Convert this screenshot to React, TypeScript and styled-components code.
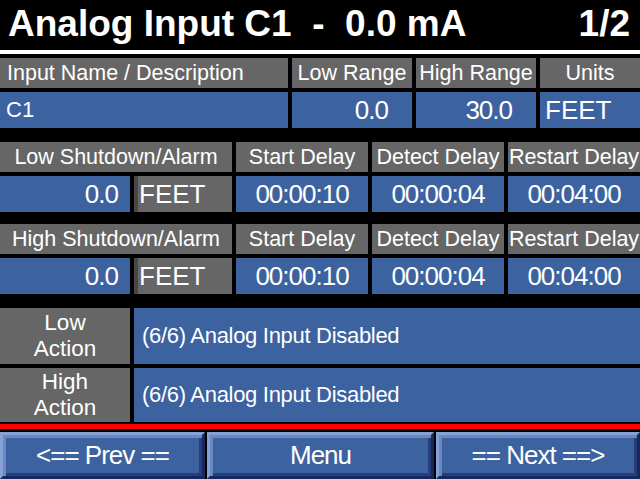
import React from "react";
import styled, { createGlobalStyle, css } from "styled-components";

const GlobalStyle = createGlobalStyle`
  html, body { margin: 0; padding: 0; background: #000; }
  body { font-family: "Liberation Sans", Arial, sans-serif; }
`;

const GRAY = "#666666";
const BLUE = "#3d62a0";

const Screen = styled.div`
  width: 640px;
  height: 479px;
  background: #000;
  display: flex;
  flex-direction: column;
  overflow: hidden;
  color: #fff;
`;

const TitleBar = styled.div`
  height: 50px;
  display: flex;
  align-items: center;
  justify-content: space-between;
  padding: 0 10px 3px 8px;
  box-sizing: border-box;
  font-weight: bold;
  font-size: 37px;
  white-space: pre;
`;

const Divider = styled.div`
  height: 4px;
  background: #fff;
  margin-bottom: 4px;
`;

const Grid = styled.div<{ $cols: string; $rows: string; $top?: number }>`
  display: grid;
  grid-template-columns: ${(p) => p.$cols};
  grid-template-rows: ${(p) => p.$rows};
  gap: 4px;
  margin-top: ${(p) => p.$top ?? 0}px;
`;

type CellProps = {
  $tone: "gray" | "blue";
  $align?: "left" | "center" | "right";
  $size?: number;
  $pad?: string;
  $span?: number;
  $tight?: boolean;
  $edge?: boolean;
};

const Cell = styled.div<CellProps>`
  background: ${(p) => (p.$tone === "gray" ? GRAY : BLUE)};
  display: flex;
  align-items: center;
  justify-content: ${(p) =>
    p.$align === "left" ? "flex-start" : p.$align === "right" ? "flex-end" : "center"};
  text-align: ${(p) => p.$align ?? "center"};
  font-size: ${(p) => p.$size ?? 21.5}px;
  padding: ${(p) => p.$pad ?? "0"};
  box-sizing: border-box;
  white-space: nowrap;
  overflow: visible;
  letter-spacing: ${(p) => (p.$tight ? "-1px" : "0")};
  ${(p) => (p.$span ? css`grid-column: span ${p.$span};` : "")}
  ${(p) => (p.$edge ? css`border-left: 4px solid #474747;` : "")}
`;

const ActionLabel = styled(Cell)`
  line-height: 26px;
  font-size: 22.5px;
  flex-direction: column;
`;

const ActionText = styled(Cell)`
  font-size: 22px;
  letter-spacing: -0.3px;
`;

const RedRule = styled.div`
  height: 5px;
  background: #ff0000;
  margin: 2px 0 3px;
`;

const ButtonBar = styled.div`
  display: grid;
  grid-template-columns: 205px 227px 1fr;
  gap: 2px;
  height: 47px;
`;

const NavButton = styled.div`
  background: ${BLUE};
  border-style: solid;
  border-width: 3px;
  border-color: #86a2d4 #16295f #16295f #86a2d4;
  box-shadow: inset 3px 3px 0 #6a89c2, inset -3px -3px 0 #263e7c;
  box-sizing: border-box;
  display: flex;
  align-items: center;
  justify-content: center;
  font-size: 26px;
  letter-spacing: -1px;
  white-space: pre;
  color: #fff;
`;

type DelayRow = { label: string; value: string; units: string; start: string; detect: string; restart: string };

const rows: DelayRow[] = [
  { label: "Low Shutdown/Alarm", value: "0.0", units: "FEET", start: "00:00:10", detect: "00:00:04", restart: "00:04:00" },
  { label: "High Shutdown/Alarm", value: "0.0", units: "FEET", start: "00:00:10", detect: "00:00:04", restart: "00:04:00" },
];

export default function App() {
  return (
    <Screen>
      <GlobalStyle />
      <TitleBar>
        <span>{"Analog Input C1  -  0.0 mA"}</span>
        <span>1/2</span>
      </TitleBar>
      <Divider />

      <Grid $cols="288px 120px 120px 100px" $rows="30px 36px">
        <Cell $tone="gray" $align="left" $pad="0 0 0 7px">Input Name / Description</Cell>
        <Cell $tone="gray">Low Range</Cell>
        <Cell $tone="gray">High Range</Cell>
        <Cell $tone="gray">Units</Cell>
        <Cell $tone="blue" $align="left" $pad="0 0 0 6px" $size={22}>C1</Cell>
        <Cell $tone="blue" $align="right" $pad="0 24px 0 0" $size={26} $tight>0.0</Cell>
        <Cell $tone="blue" $align="right" $pad="0 24px 0 0" $size={26} $tight>30.0</Cell>
        <Cell $tone="blue" $align="left" $pad="0 0 0 5px" $size={26}>FEET</Cell>
      </Grid>

      {rows.map((r, i) => (
        <Grid key={r.label} $cols="130px 98px 132px 132px 132px" $rows="30px 36px" $top={i === 0 ? 14 : 12}>
          <Cell $tone="gray" $span={2}>{r.label}</Cell>
          <Cell $tone="gray">Start Delay</Cell>
          <Cell $tone="gray">Detect Delay</Cell>
          <Cell $tone="gray">Restart Delay</Cell>
          <Cell $tone="blue" $align="right" $pad="0 12px 0 0" $size={26} $tight>{r.value}</Cell>
          <Cell $tone="gray" $align="left" $pad="0 0 0 1px" $size={26} $edge>{r.units}</Cell>
          <Cell $tone="blue" $size={26} $tight>{r.start}</Cell>
          <Cell $tone="blue" $size={26} $tight>{r.detect}</Cell>
          <Cell $tone="blue" $size={26} $tight>{r.restart}</Cell>
        </Grid>
      ))}

      <Grid $cols="130px 1fr" $rows="56px 54px" $top={14}>
        <ActionLabel $tone="gray"><span>Low</span><span>Action</span></ActionLabel>
        <ActionText $tone="blue" $align="left" $pad="0 0 0 8px">(6/6) Analog Input Disabled</ActionText>
        <ActionLabel $tone="gray"><span>High</span><span>Action</span></ActionLabel>
        <ActionText $tone="blue" $align="left" $pad="0 0 0 8px">(6/6) Analog Input Disabled</ActionText>
      </Grid>

      <RedRule />

      <ButtonBar>
        <NavButton>{"<== Prev =="}</NavButton>
        <NavButton>Menu</NavButton>
        <NavButton>{"== Next ==>"}</NavButton>
      </ButtonBar>
    </Screen>
  );
}
